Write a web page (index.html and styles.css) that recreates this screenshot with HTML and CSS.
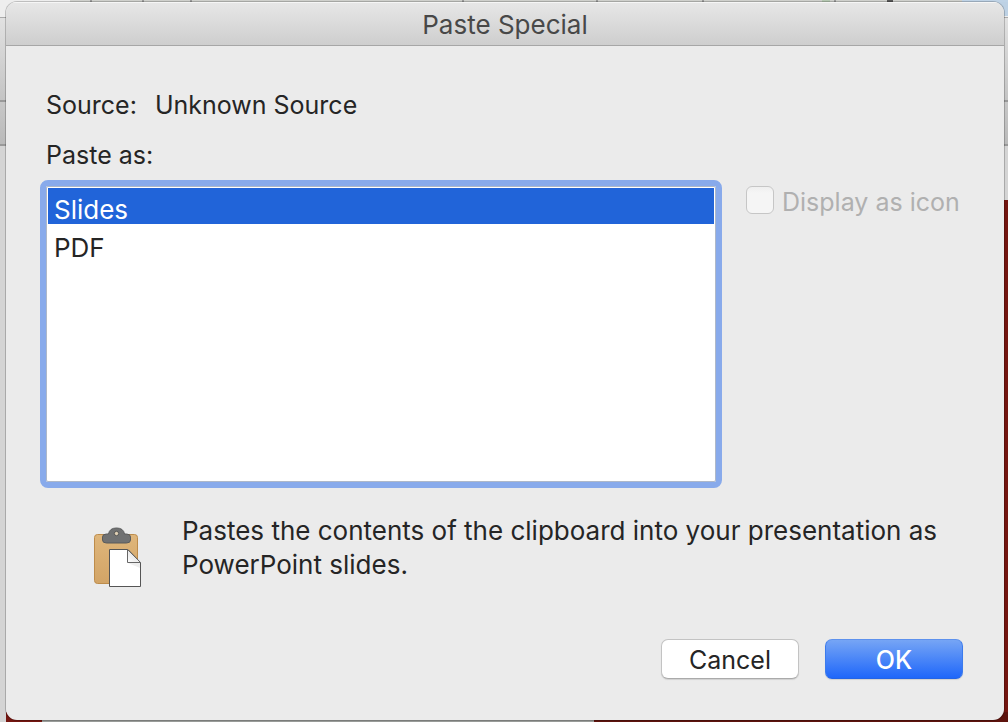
FILE: index.html
```html
<!DOCTYPE html>
<html lang="en">
<head>
<meta charset="utf-8">
<title>Paste Special</title>
<link rel="stylesheet" href="styles.css">
</head>
<body class="desktop">
<main class="dialog" role="dialog" aria-labelledby="dialog-title">
  <header class="titlebar"><h1 class="title" id="dialog-title">Paste Special</h1></header>
  <form class="content">
    <p class="source"><span>Source:</span><span>Unknown Source</span></p>
    <label class="list-label" for="formats">Paste as:</label>
    <div class="options">
      <select class="formats" id="formats" size="4">
        <option class="format" selected>Slides</option>
        <option class="format">PDF</option>
      </select>
      <label class="check-row" for="as-icon"><input class="check" id="as-icon" type="checkbox" disabled>Display as icon</label>
    </div>
    <div class="result">
      <svg class="clipboard" viewBox="0 0 48 60" aria-hidden="true">
        <defs>
          <linearGradient id="board" x2="0" y2="1"><stop stop-color="#dfb67b"/><stop offset="1" stop-color="#d2a466"/></linearGradient>
          <linearGradient id="fold" x1="1" y1="0" x2="0" y2="1"><stop offset=".4" stop-color="#e4e4e4"/><stop offset="1" stop-color="#fff"/></linearGradient>
        </defs>
        <rect x="1.500" y="6.500" width="43" height="49" rx="3" fill="url(#board)" stroke="#bd8c4b"/>
        <path d="M9.500 9q0-3 4-3h2q1-6 8-6t8 6h2q4 0 4 3v3q0 3-4 3h-20q-4 0-4-3z" fill="#707172" stroke="#595a5b"/>
        <circle cx="23.500" cy="5.500" r="2.200" fill="#dfcfb4" stroke="#555"/>
        <path d="M16.500 21.500h18.500l12.500 13v24h-31z" fill="#fff" stroke="#555"/>
        <path d="M35 35h12v5z" fill="#eee"/>
        <path d="M34.500 21.500v13h13z" fill="url(#fold)" stroke="#666"/>
      </svg>
      <p class="description">Pastes the contents of the clipboard into your presentation as PowerPoint slides.</p>
    </div>
    <div class="actions">
      <button class="button" type="button">Cancel</button>
      <button class="button primary" type="submit">OK</button>
    </div>
  </form>
</main>
</body>
</html>
```
FILE: styles.css
```css
* { box-sizing: border-box; }

.desktop {
  margin: 0;
  padding: 2px 4px 2px 6px;
  min-height: 100vh;
  display: flex;
  font: 25px/34px Inter, "Liberation Sans", sans-serif;
  color: #252525;
  background:
    linear-gradient(90deg, transparent 70px, #cfd0cc 70px 90px, #999 90px 92px, #cfd0cc 92px 142px, #999 142px 144px, #cfd0cc 144px 190px, #999 190px 192px, #cfd0cc 192px 462px, #999 462px 464px, #cfd0cc 464px 596px, #999 596px 598px, #cfd0cc 598px 702px, #999 702px 704px, #cfd0cc 704px 822px, #b4c7b1 822px 830px, #cfd0cc 830px 834px, #999 834px 836px, #cfd0cc 836px 887px, #555 887px 893px, #cfd0cc 893px 962px, #bfd3e6 962px) 0 0 / 100% 2px no-repeat,
    linear-gradient(#bdd1e4, #bdd1e4) 100% 0 / 20px 16px no-repeat,
    linear-gradient(90deg, #741610 36px, #999c99 36px 588px, #5d130d 588px) 6px 100% / 100% 10px no-repeat,
    linear-gradient(#d4d4d4, #d4d4d4) 0 100% / 6px calc(100% - 146px) no-repeat,
    linear-gradient(#741610, #741610) 100% 100% / 20px calc(100% - 200px) no-repeat,
    linear-gradient(#eee 17px, #aaa 17px 18px, #e1e1e1 18px, #c4c4c4 100px, #999 100px 102px, #c7c7c7 102px, #bababa 144px, #999 144px 146px, #d4d4d4 146px);
}

.dialog {
  flex: 1;
  display: flex;
  flex-direction: column;
  overflow: hidden;
  border-radius: 11px;
  background: #ebebeb;
  box-shadow: 0 0 0 1px rgb(0 0 0 / 20%);
}

.titlebar {
  height: 44px;
  padding-top: 2px;
  display: flex;
  align-items: center;
  justify-content: center;
  border-bottom: 1px solid #a6a6a6;
  background: linear-gradient(#e7e7e7, #cecece);
  box-shadow: inset 0 1px #f6f6f6;
}

.title { margin: 0; font-size: 26px; font-weight: 400; color: #484848; }

.content {
  flex: 1;
  display: flex;
  flex-direction: column;
  padding: 42px 41px 41px 34px;
}

.source { display: flex; gap: 18px; margin: 0 0 16px 6px; }

.list-label { margin: 0 0 8px 6px; }

.options { display: flex; align-items: flex-start; gap: 24px; }

.formats {
  flex: 0 1 682px;
  height: 308px;
  margin: 0;
  padding: 2px;
  border: 6px solid #88aaeb;
  border-radius: 8px;
  outline: 1px solid #aeb8c8;
  outline-offset: -7px;
  background: #fff;
  font: inherit;
  font-size: 26px;
  color: inherit;
  overflow: hidden;
}

.format { height: 36px; min-height: 0; margin-bottom: 2px; padding: 6px 6px 0; line-height: 34px; }

.format:checked { color: #fff; background: #2164d9 linear-gradient(#2164d9, #2164d9); }

.check-row { display: flex; align-items: flex-start; gap: 8px; margin-top: 5px; color: #b0b0b0; white-space: nowrap; }

.check {
  appearance: none;
  width: 28px;
  height: 28px;
  margin: 1px 0 0;
  border: 1px solid #c6c6c6;
  border-radius: 6px;
  background: linear-gradient(#efefef, #f5f5f5 6px);
}

.result { display: flex; align-items: flex-start; gap: 41px; margin: 26px 0 0 53px; }

.clipboard { flex: none; width: 48px; height: 60px; margin-top: 14px; overflow: visible; }

.description { margin: 0; font-size: 26px; }

.actions { display: flex; justify-content: flex-end; gap: 26px; margin-top: auto; }

.button {
  width: 138px;
  height: 40px;
  padding: 2px 0 0;
  border: 1px solid #c3c3c3;
  border-bottom-color: #aaa;
  border-radius: 7px;
  background: #fff;
  font: inherit;
  color: #252525;
  box-shadow: 0 1px 1px #d0d0d0;
}

.primary {
  border-color: #5d91ed #3c7bec #2364e6;
  background: linear-gradient(#76a5f5, #1f67fa);
  font-weight: 500;
  color: #fff;
}
```
